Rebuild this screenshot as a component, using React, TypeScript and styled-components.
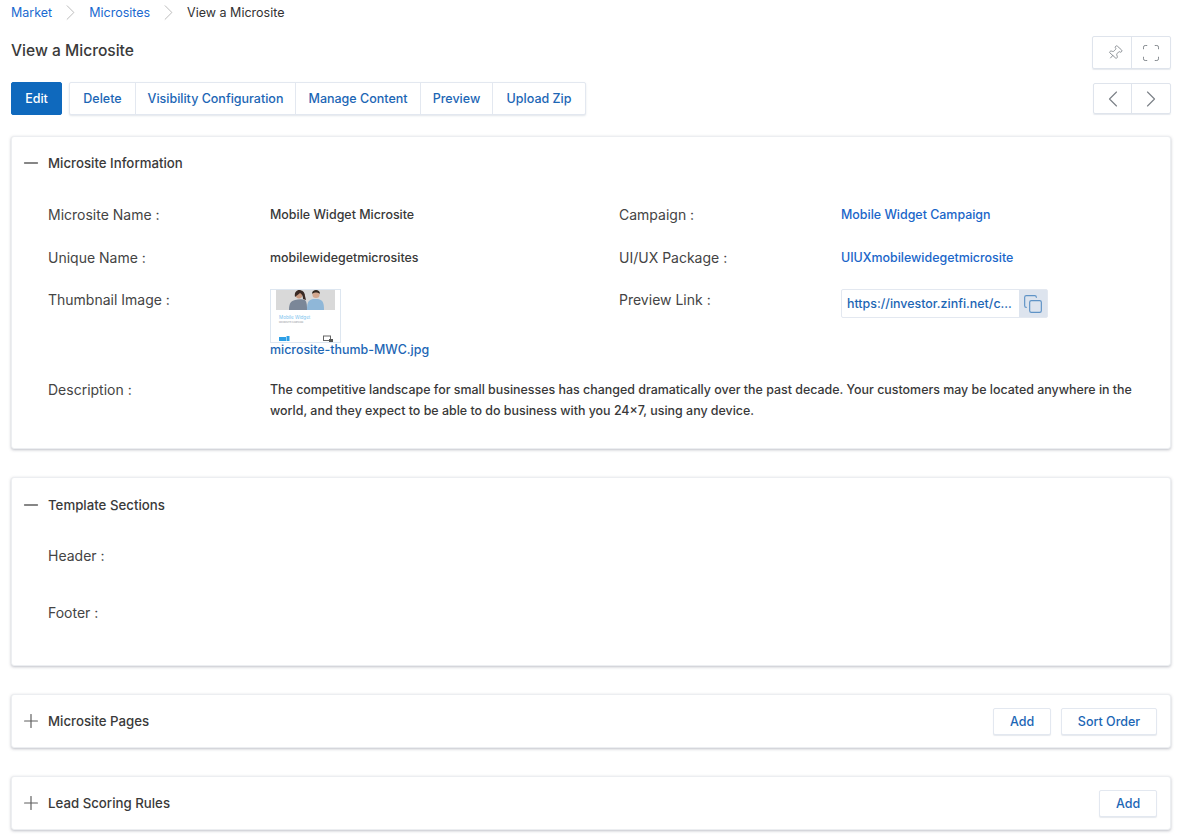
import { ReactNode } from "react";
import styled, { createGlobalStyle } from "styled-components";
import { ChevronLeft, ChevronRight, Copy, Minus, Pin, Plus, Scan } from "lucide-react";

const GlobalStyle = createGlobalStyle`
  html, body {
    margin: 0;
    padding: 0;
    background: #fff;
    font-family: Inter, "Liberation Sans", sans-serif;
    color: #333;
  }
`;

const Page = styled.div`
  padding: 0 10px 0 11px;
  height: 839px;
  overflow: hidden;
  box-sizing: border-box;
`;

const Breadcrumb = styled.nav`
  display: flex;
  align-items: center;
  height: 24px;
  font-size: 12.5px;
  color: #333;
`;

const Crumb = styled.a`
  color: #1a6ad0;
`;

const CrumbSep = styled.span`
  display: flex;
  width: 37px;
  justify-content: center;
  color: #b4b4b4;
`;

const TitleRow = styled.div`
  display: flex;
  justify-content: space-between;
  align-items: flex-start;
  height: 34px;
  margin-top: 9px;
`;

const Title = styled.h1`
  margin: 0;
  font-size: 15.6px;
  line-height: 36px;
  font-weight: 500;
  color: #3a3a3a;
`;

const ToolbarRow = styled.div`
  display: flex;
  justify-content: space-between;
  align-items: center;
  margin-top: 15px;
  height: 33px;
`;

const Actions = styled.div`
  display: flex;
  align-items: stretch;
  height: 33px;
`;

const PrimaryButton = styled.button`
  width: 51px;
  margin-right: 7px;
  background: #0f69bd;
  color: #fff;
  border: 1px solid #0f69bd;
  border-radius: 2px;
  font: 500 12.5px Inter, sans-serif;
  padding: 0;
`;

const ButtonGroup = styled.div`
  display: flex;
  border: 1px solid #e3e8f0;
  border-radius: 2px;
  box-shadow: 0 1px 2px rgba(90, 110, 140, 0.18);
  background: #fff;
`;

const GroupButton = styled.button<{ $w: number }>`
  width: ${(p) => p.$w}px;
  background: transparent;
  border: 0;
  border-left: 1px solid #e3e8f0;
  color: #1c66b5;
  font: 500 12.5px Inter, sans-serif;
  padding: 0;

  &:first-child {
    border-left: 0;
  }
`;

const IconGroup = styled.div<{ $h: number; $mt?: number }>`
  display: flex;
  box-sizing: border-box;
  height: ${(p) => p.$h}px;
  margin-top: ${(p) => p.$mt ?? 0}px;
  border: 1px solid #dfe4ec;
  border-radius: 2px;
  box-shadow: 0 1px 1px rgba(90, 110, 140, 0.15);
`;

const IconButton = styled.span<{ $w: number }>`
  display: flex;
  align-items: center;
  justify-content: center;
  width: ${(p) => p.$w}px;
  color: #7d8288;
  border-left: 1px solid #dfe4ec;

  &:first-child {
    border-left: 0;
  }
`;

const PinIcon = styled(Pin)`
  margin-left: 5px;
  transform: rotate(42deg);
`;

const Card = styled.section<{ $h: number; $mt: number }>`
  height: ${(p) => p.$h}px;
  margin-top: ${(p) => p.$mt}px;
  box-sizing: border-box;
  background: #fff;
  border: 1px solid #eceef1;
  border-radius: 3px;
  box-shadow: 0 1px 3px rgba(70, 75, 95, 0.35);
  padding: 0 13px;
`;

const CardHeader = styled.div<{ $h: number }>`
  display: flex;
  align-items: center;
  height: ${(p) => p.$h}px;
`;

const Toggle = styled.span`
  display: flex;
  width: 27.6px;
  margin-left: -4.6px;
  color: #5f5f5f;
`;

const CardTitle = styled.h2`
  flex: 1;
  margin: 0;
  font-size: 13.25px;
  font-weight: 500;
  color: #3a3a3a;
`;

const OutlineButton = styled.button<{ $w: number }>`
  width: ${(p) => p.$w}px;
  height: 27px;
  margin-left: 10px;
  background: #fff;
  border: 1px solid #e3e8f0;
  border-radius: 2px;
  box-shadow: 0 1px 1px rgba(90, 110, 140, 0.15);
  color: #1c66b5;
  font: 500 12.5px Inter, sans-serif;
  padding: 0;
`;

const InfoGrid = styled.div`
  display: grid;
  grid-template-columns: 222px 349px 222px 1fr;
  grid-auto-rows: auto;
  padding: 15px 0 0 23px;
`;

const Label = styled.div<{ $h: number }>`
  font-size: 14px;
  line-height: 21px;
  height: ${(p) => p.$h}px;
  color: #444;
`;

const Value = styled.div`
  font-size: 12.43px;
  font-weight: 500;
  line-height: 21px;
  color: #383838;
`;

const LinkValue = styled(Value)`
  color: #1a66c9;
`;

const Wide = styled(Value)`
  grid-column: 2 / 5;
  padding-right: 12px;
`;

const Thumb = styled.div`
  display: block;
  width: 71px;
  height: 54px;
  box-sizing: border-box;
  border: 1px solid #dde6f0;
  line-height: 0;
`;

const FileLink = styled.a`
  display: block;
  color: #1c66b5;
  font-size: 12.43px;
  font-weight: 500;
  line-height: 14px;
`;

const CopyField = styled.div`
  display: flex;
  width: 207px;
  height: 29px;
  box-sizing: border-box;
  border: 1px solid #e3e8f0;
  border-radius: 2px;
`;

const CopyText = styled.span`
  flex: 1;
  padding-left: 5px;
  font-size: 12.43px;
  font-weight: 500;
  line-height: 27px;
  color: #1c66b5;
  white-space: nowrap;
`;

const CopyButton = styled.span`
  display: flex;
  align-items: center;
  justify-content: center;
  width: 28px;
  background: #dde4ee;
  color: #5f93c6;
`;

const SectionRows = styled.div`
  padding: 14px 0 0 23px;
`;

const SectionRow = styled.div`
  font-size: 14px;
  line-height: 21px;
  height: 57px;
  color: #444;
`;

const Thumbnail = () => (
  <svg width="69" height="52" viewBox="0 0 69 52">
    <rect width="69" height="52" fill="#fff" />
    <rect x="5" y="0" width="59" height="20" fill="#d9d9d9" />
    <path d="M18 20c0-7 2-9 6-10 3-1 8-1 10 0 2 2 2 6 2 10z" fill="#7b8798" />
    <circle cx="28" cy="5" r="3.4" fill="#c99a80" />
    <path d="M24 7c-1-5 2-7 4-7 3 0 6 2 6 6l1 4-3-1c0-3-1-5-3-6-1 1-3 2-5 4z" fill="#3a2a24" />
    <path d="M36 20c0-7 1-10 6-11h5c5 1 6 4 6 11z" fill="#8fb7d8" />
    <circle cx="45" cy="4.5" r="3.6" fill="#d3a78e" />
    <path d="M41 4c0-3 2-4 4-4s4 1 4 4c-2-2-6-2-8 0z" fill="#33281f" />
    <text x="8" y="29" fontSize="4.6" fontFamily="Inter, sans-serif" fill="#7cc4ee">
      Mobile Widget
    </text>
    <text x="8" y="33" fontSize="2.2" fontFamily="Inter, sans-serif" fill="#8d9298">
      MICROSITE CAMPAIGN
    </text>
    <rect x="8" y="47" width="7" height="4" fill="#2d9fe6" />
    <rect x="15.5" y="46" width="3" height="5" fill="#2d9fe6" />
    <rect x="52.5" y="46" width="7" height="4.5" fill="none" stroke="#666" strokeWidth="1" />
    <rect x="58" y="49" width="4" height="3" fill="#555" />
  </svg>
);

const Accordion = ({ open, title, h, children }: { open?: boolean; title: string; h: number; children?: ReactNode }) => (
  <CardHeader $h={h}>
    <Toggle>{open ? <Minus size={22} strokeWidth={1.5} /> : <Plus size={22} strokeWidth={1.3} />}</Toggle>
    <CardTitle>{title}</CardTitle>
    {children}
  </CardHeader>
);

const App = () => (
  <Page>
    <GlobalStyle />
    <Breadcrumb>
      <Crumb>Market</Crumb>
      <CrumbSep>
        <ChevronRight size={27} strokeWidth={0.8} />
      </CrumbSep>
      <Crumb>Microsites</Crumb>
      <CrumbSep>
        <ChevronRight size={27} strokeWidth={0.8} />
      </CrumbSep>
      <span>View a Microsite</span>
    </Breadcrumb>

    <TitleRow>
      <Title>View a Microsite</Title>
      <IconGroup $h={33} $mt={3}>
        <IconButton $w={38}>
          <PinIcon size={16} strokeWidth={1.2} />
        </IconButton>
        <IconButton $w={38}>
          <Scan size={20} strokeWidth={1.1} />
        </IconButton>
      </IconGroup>
    </TitleRow>

    <ToolbarRow>
      <Actions>
        <PrimaryButton>Edit</PrimaryButton>
        <ButtonGroup>
          <GroupButton $w={65}>Delete</GroupButton>
          <GroupButton $w={160}>Visibility Configuration</GroupButton>
          <GroupButton $w={125}>Manage Content</GroupButton>
          <GroupButton $w={72}>Preview</GroupButton>
          <GroupButton $w={93}>Upload Zip</GroupButton>
        </ButtonGroup>
      </Actions>
      <IconGroup $h={31}>
        <IconButton $w={37}>
          <ChevronLeft size={28} strokeWidth={1} />
        </IconButton>
        <IconButton $w={38}>
          <ChevronRight size={28} strokeWidth={1} />
        </IconButton>
      </IconGroup>
    </ToolbarRow>

    <Card $h={313} $mt={21}>
      <Accordion open title="Microsite Information" h={52} />
      <InfoGrid>
        <Label $h={43}>Microsite Name :</Label>
        <Value>Mobile Widget Microsite</Value>
        <Label $h={43}>Campaign :</Label>
        <LinkValue>Mobile Widget Campaign</LinkValue>

        <Label $h={42}>Unique Name :</Label>
        <Value>mobilewidegetmicrosites</Value>
        <Label $h={42}>UI/UX Package :</Label>
        <LinkValue>UIUXmobilewidegetmicrosite</LinkValue>

        <Label $h={90}>Thumbnail Image :</Label>
        <div>
          <Thumb>
            <Thumbnail />
          </Thumb>
          <FileLink>microsite-thumb-MWC.jpg</FileLink>
        </div>
        <Label $h={90}>Preview Link :</Label>
        <div>
          <CopyField>
            <CopyText>https://investor.zinfi.net/c...</CopyText>
            <CopyButton>
              <Copy size={20} strokeWidth={1.4} />
            </CopyButton>
          </CopyField>
        </div>

        <Label $h={42}>Description :</Label>
        <Wide>
          The competitive landscape for small businesses has changed dramatically over the past decade. Your customers
          may be located anywhere in the world, and they expect to be able to do business with you 24×7, using any
          device.
        </Wide>
      </InfoGrid>
    </Card>

    <Card $h={189} $mt={28}>
      <Accordion open title="Template Sections" h={53} />
      <SectionRows>
        <SectionRow>Header :</SectionRow>
        <SectionRow>Footer :</SectionRow>
      </SectionRows>
    </Card>

    <Card $h={54} $mt={28}>
      <Accordion title="Microsite Pages" h={52}>
        <OutlineButton $w={58}>Add</OutlineButton>
        <OutlineButton $w={96}>Sort Order</OutlineButton>
      </Accordion>
    </Card>

    <Card $h={54} $mt={28}>
      <Accordion title="Lead Scoring Rules" h={52}>
        <OutlineButton $w={58}>Add</OutlineButton>
      </Accordion>
    </Card>
  </Page>
);

export default App;
